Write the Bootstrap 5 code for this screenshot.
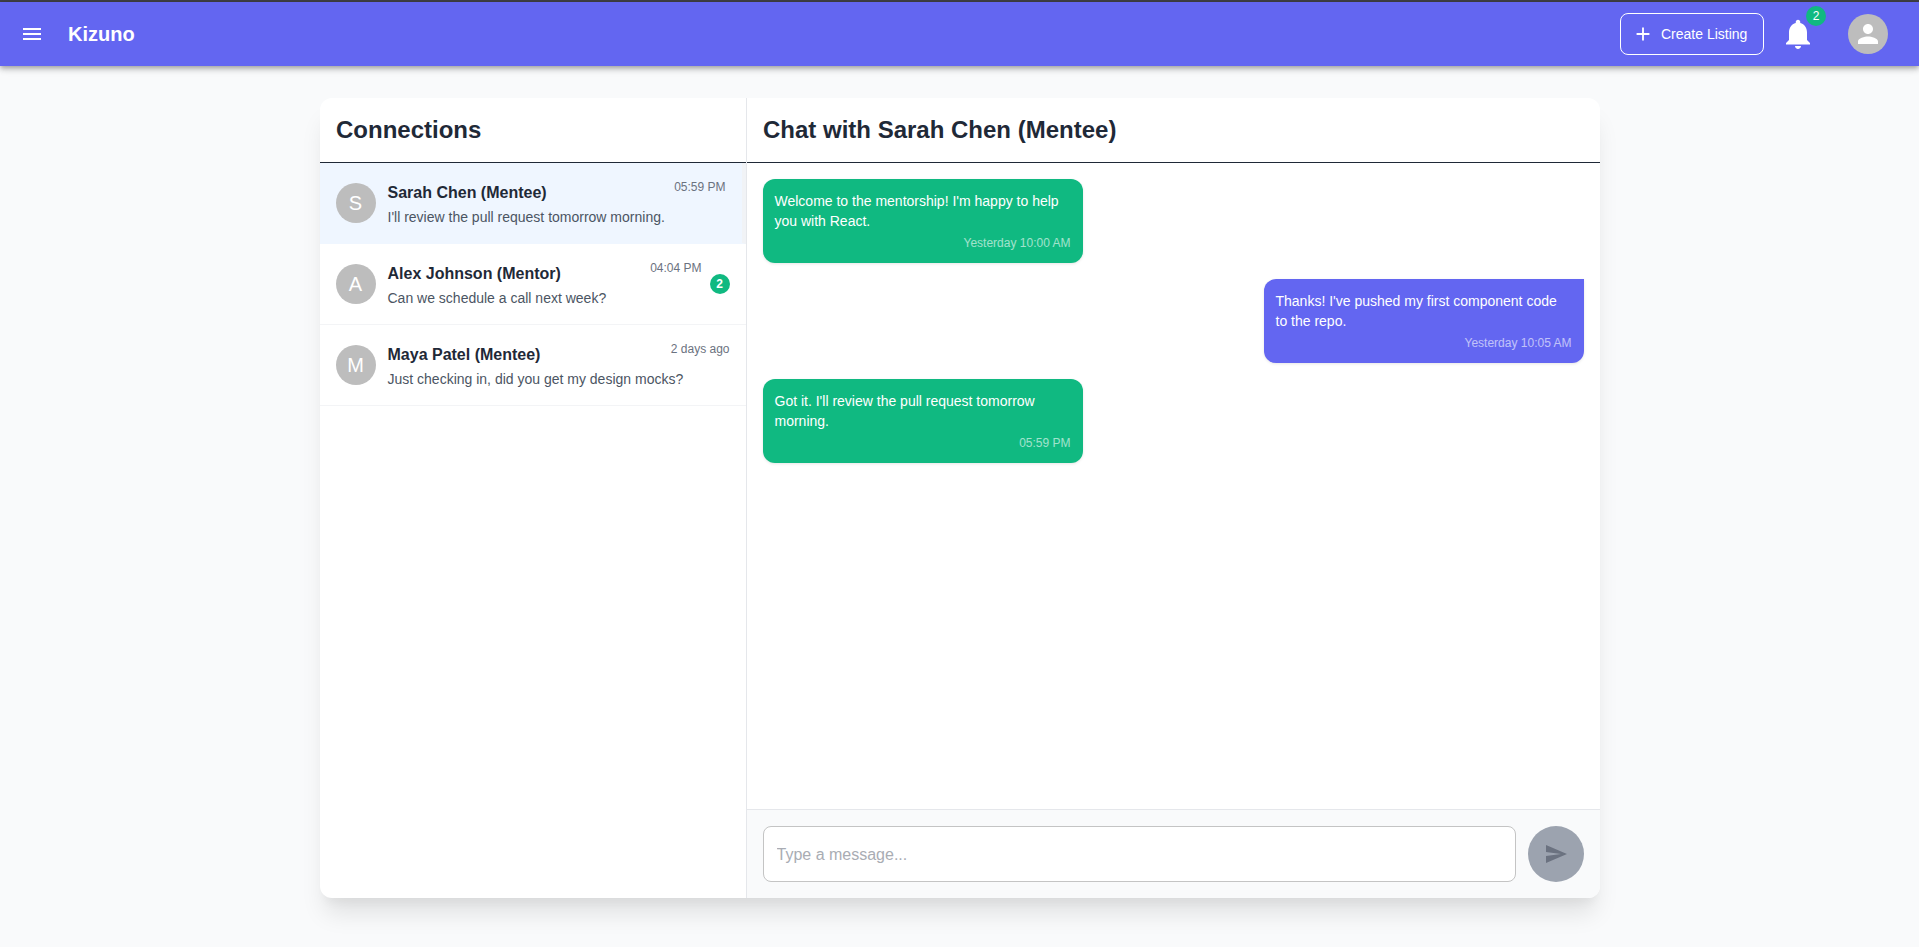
<!DOCTYPE html>
<html lang="en">
<head>
  <meta charset="UTF-8" />
  <meta name="viewport" content="width=device-width, initial-scale=1.0"/>
  <title>Kizuno - Messages</title>
  <link href="https://cdn.jsdelivr.net/npm/bootstrap@5.3.0/dist/css/bootstrap.min.css" rel="stylesheet">
  <style>
    html, body { height: 100%; }
    body { font-family: "Liberation Sans", Arial, sans-serif; background: #f9fafb; color: #1f2937; overflow: hidden; }
    .top-edge { height: 2px; background: #3f3f46; }
    .app-bar { height: 64px; background: #6366f1; box-shadow: 0 2px 4px -1px rgba(0,0,0,.2), 0 4px 5px rgba(0,0,0,.14), 0 1px 10px rgba(0,0,0,.12); padding: 0 31px 0 20px; position: relative; }
    .brand-name { font-size: 20px; font-weight: 700; color: #fff; margin-left: 24px; }
    .create-btn { width: 144px; height: 42px; border: 1px solid #fff; border-radius: 8px; color: #fff; font-size: 14px; background: transparent; padding: 0 0 0 11px; gap: 7px; }
    .bell-wrap { width: 36px; height: 36px; margin-left: 16px; }
    .bell-badge { position: absolute; top: -10px; right: -10px; width: 20px; height: 20px; border-radius: 50%; background: #10b981; color: #fff; font-size: 12px; line-height: 20px; text-align: center; }
    .user-circle { width: 40px; height: 40px; border-radius: 50%; background: #bdbdbd; margin-left: 32px; }
    .chat-page { padding-top: 32px; }
    .chat-shell { width: 1280px; height: 800px; background: #fff; border-radius: 12px; box-shadow: 0 20px 25px -5px rgba(0,0,0,.1), 0 10px 10px -5px rgba(0,0,0,.04); overflow: hidden; }
    .side-pane { width: 427px; border-right: 1px solid #e5e7eb; }
    .pane-head { height: 65px; padding: 0 16px 0 16.5px; border-bottom: 1px solid #1f2937; }
    .pane-head h2 { font-size: 24px; font-weight: 700; color: #1f2937; margin: 0; }
    .contact-row { height: 81px; padding: 0 16px; border-bottom: 1px solid #f3f4f6; }
    .contact-row.is-active { background: #eff6ff; border-bottom-color: #eff6ff; border-right: 4px solid #f1f3f6; }
    .avatar-dot { width: 40px; height: 40px; border-radius: 50%; background: #bdbdbd; color: #fff; font-size: 20px; margin-right: 12px; }
    .contact-body { padding-top: 3px; }
    .contact-name { font-size: 16px; font-weight: 700; color: #1f2937; line-height: 24px; }
    .contact-text { font-size: 14px; color: #4b5563; line-height: 21px; margin-top: 2px; }
    .contact-time { font-size: 12px; color: #6b7280; line-height: 18px; position: absolute; top: 15px; right: 0; }
    .unread-dot { width: 20px; height: 20px; border-radius: 50%; background: #10b981; color: #fff; font-size: 12px; font-weight: 700; margin-left: 8px; }
    .msg-list { padding: 16px; gap: 16px; }
    .bubble { width: 320px; height: 84px; border-radius: 12px; padding: 12px; font-size: 14px; line-height: 20px; color: #fff; box-shadow: 0 1px 3px rgba(0,0,0,.1); }
    .bubble-in { background: #10b981; }
    .bubble-out { background: #6366f1; border-top-right-radius: 0; }
    .bubble-time { font-size: 12px; line-height: 18px; text-align: right; opacity: .6; margin-top: 3px; }
    .composer { height: 89px; background: #f9fafb; border-top: 1px solid #e5e7eb; padding: 16px; gap: 12px; }
    .composer .form-control { height: 56px; border: 1px solid #c4c4c4; border-radius: 8px; font-size: 16px; padding: 1px 13px 0; box-shadow: none; }
    .composer .form-control::placeholder { color: #a9acb3; }
    .send-btn { width: 56px; height: 56px; flex: none; border: 0; border-radius: 50%; background: #9ca3af; padding: 0; }
  </style>
</head>
<body>
  <div class="top-edge"></div>
  <header class="app-bar d-flex align-items-center">
    <svg width="24" height="24" viewBox="0 0 24 24" fill="#fff"><path d="M3 18h18v-2H3v2zm0-5h18v-2H3v2zm0-7v2h18V6H3z"/></svg>
    <span class="brand-name">Kizuno</span>
    <div class="ms-auto d-flex align-items-center">
      <button class="create-btn d-flex align-items-center">
        <svg width="22" height="22" viewBox="0 0 24 24" fill="#fff"><path d="M19 13h-6v6h-2v-6H5v-2h6V5h2v6h6v2z"/></svg>
        Create Listing
      </button>
      <div class="bell-wrap position-relative">
        <svg width="36" height="36" viewBox="0 0 24 24" fill="#fff" class="d-block"><path d="M12 22c1.1 0 2-.9 2-2h-4c0 1.1.9 2 2 2zm6-6v-5c0-3.07-1.63-5.64-4.5-6.32V4c0-.83-.67-1.5-1.5-1.5s-1.5.67-1.5 1.5v.68C7.64 5.36 6 7.92 6 11v5l-2 2v1h16v-1l-2-2z"/></svg>
        <span class="bell-badge">2</span>
      </div>
      <div class="user-circle d-flex align-items-center justify-content-center">
        <svg width="30" height="30" viewBox="0 0 24 24" fill="#fff"><path d="M12 12c2.21 0 4-1.79 4-4s-1.79-4-4-4-4 1.79-4 4 1.79 4 4 4zm0 2c-2.67 0-8 1.34-8 4v2h16v-2c0-2.66-5.33-4-8-4z"/></svg>
      </div>
    </div>
  </header>

  <main class="chat-page d-flex justify-content-center">
    <div class="chat-shell d-flex">
      <aside class="side-pane flex-shrink-0 d-flex flex-column">
        <div class="pane-head d-flex align-items-center"><h2>Connections</h2></div>
        <div class="contact-row is-active d-flex align-items-center">
          <div class="avatar-dot d-flex align-items-center justify-content-center flex-shrink-0">S</div>
          <div class="contact-body flex-grow-1 position-relative align-self-stretch d-flex flex-column justify-content-center">
            <div class="contact-name">Sarah Chen (Mentee)</div>
            <div class="contact-text">I'll review the pull request tomorrow morning.</div>
            <span class="contact-time">05:59 PM</span>
          </div>
        </div>
        <div class="contact-row d-flex align-items-center">
          <div class="avatar-dot d-flex align-items-center justify-content-center flex-shrink-0">A</div>
          <div class="contact-body flex-grow-1 position-relative align-self-stretch d-flex flex-column justify-content-center">
            <div class="contact-name">Alex Johnson (Mentor)</div>
            <div class="contact-text">Can we schedule a call next week?</div>
            <span class="contact-time">04:04 PM</span>
          </div>
          <span class="unread-dot d-flex align-items-center justify-content-center flex-shrink-0">2</span>
        </div>
        <div class="contact-row d-flex align-items-center">
          <div class="avatar-dot d-flex align-items-center justify-content-center flex-shrink-0">M</div>
          <div class="contact-body flex-grow-1 position-relative align-self-stretch d-flex flex-column justify-content-center">
            <div class="contact-name">Maya Patel (Mentee)</div>
            <div class="contact-text">Just checking in, did you get my design mocks?</div>
            <span class="contact-time">2 days ago</span>
          </div>
        </div>
      </aside>
      <section class="flex-grow-1 d-flex flex-column">
        <div class="pane-head d-flex align-items-center"><h2>Chat with Sarah Chen (Mentee)</h2></div>
        <div class="msg-list flex-grow-1 d-flex flex-column">
          <div class="bubble bubble-in">Welcome to the mentorship! I'm happy to help you with React.<div class="bubble-time">Yesterday 10:00 AM</div></div>
          <div class="bubble bubble-out align-self-end">Thanks! I've pushed my first component code to the repo.<div class="bubble-time">Yesterday 10:05 AM</div></div>
          <div class="bubble bubble-in">Got it. I'll review the pull request tomorrow morning.<div class="bubble-time">05:59 PM</div></div>
        </div>
        <div class="composer d-flex align-items-center">
          <input class="form-control" type="text" placeholder="Type a message...">
          <button class="send-btn d-flex align-items-center justify-content-center">
            <svg width="24" height="24" viewBox="0 0 24 24" fill="#6b7280"><path d="M2.01 21 23 12 2.01 3 2 10l15 2-15 2z"/></svg>
          </button>
        </div>
      </section>
    </div>
  </main>
  <script src="https://cdn.jsdelivr.net/npm/bootstrap@5.3.0/dist/js/bootstrap.bundle.min.js"></script>
</body>
</html>
